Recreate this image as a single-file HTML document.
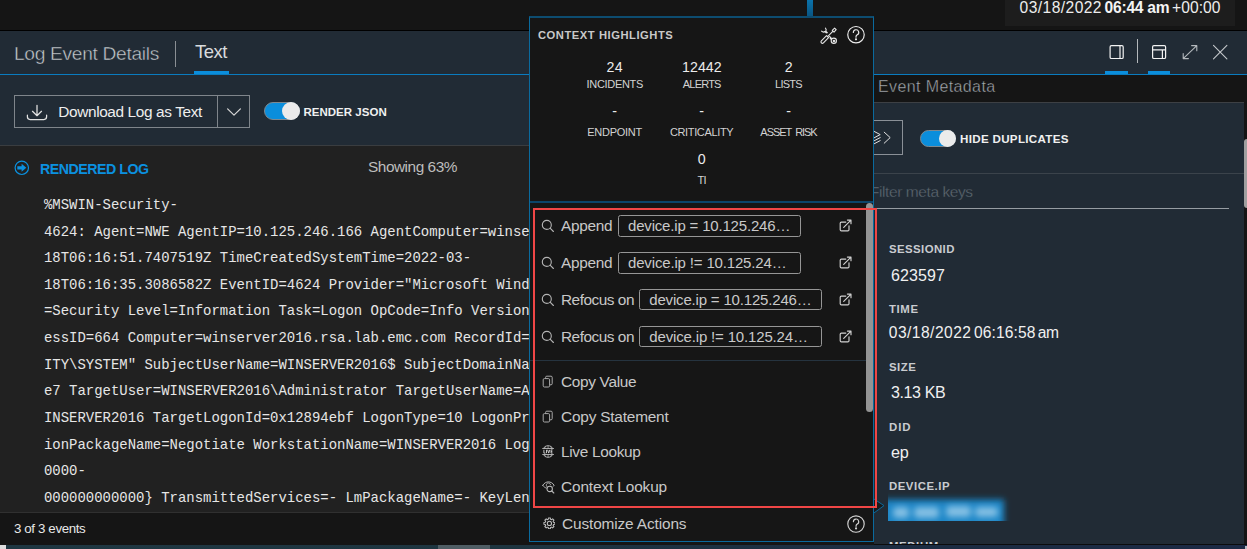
<!DOCTYPE html>
<html>
<head>
<meta charset="utf-8">
<style>
*{box-sizing:border-box;margin:0;padding:0}
html,body{width:1247px;height:549px;overflow:hidden;background:#151515}
body{position:relative;font-family:"Liberation Sans",sans-serif;color:#e4e4e4}
.abs{position:absolute}
.t{position:absolute;white-space:nowrap;line-height:1}
.blue{background:#0b8edc}
#log{position:absolute;left:44px;top:191.9px;font-family:"Liberation Mono",monospace;font-size:13.96px;line-height:26.62px;color:#e6e6e6;white-space:pre}
#pop{position:absolute;left:529px;top:16px;width:345px;height:526.3px;background:#161616;border:1px solid #0a6a9e;border-top:2px solid #0d4c70;border-left-width:1.3px;border-bottom-width:1.3px;border-right-width:1.400px}
.pill{position:absolute;height:21.5px;width:183px;border:1.2px solid #969696;border-radius:2.500px;font-size:15px;color:#c9c9c9;line-height:19px;padding-left:9px;white-space:nowrap;overflow:hidden}
</style>
</head>
<body>
<!-- top bar -->
<div class="abs" style="left:1005px;top:0;width:230px;height:25.600px;background:#1d1d1d"></div>
<div class="abs" style="left:807px;top:0;width:6px;height:17px;background:linear-gradient(#0a72ab,#0a5480)"></div>
<div class="abs" style="left:0;top:30px;width:1247px;height:1px;background:#000"></div>

<!-- main panel header -->
<div class="abs" style="left:0;top:31px;width:1247px;height:43px;background:#212b35"></div>
<div class="abs" style="left:0;top:74px;width:1247px;height:1.400px;background:#0a7cc0"></div>
<div class="abs" style="left:175px;top:41px;width:1px;height:26px;background:#8a8f94"></div>
<div class="abs blue" style="left:194px;top:71px;width:35px;height:3px"></div>
<div class="abs blue" style="left:1105px;top:71px;width:23px;height:3px"></div>
<div class="abs blue" style="left:1148px;top:71px;width:22px;height:3px"></div>
<div class="abs" style="left:1137px;top:39px;width:1px;height:24px;background:#b4b8bc"></div>

<!-- left toolbar -->
<div class="abs" style="left:0;top:75px;width:529px;height:70px;background:#212b35"></div>
<div class="abs" style="left:0;top:145px;width:529px;height:1px;background:#3a3d40"></div>
<div class="abs" style="left:14px;top:95px;width:236px;height:33px;border:1px solid #7f858b"></div>
<div class="abs" style="left:217px;top:95px;width:1px;height:33px;background:#7f858b"></div>
<div class="abs" style="left:264px;top:102.300px;width:35.700px;height:17.600px;border-radius:9px;background:#0b8edc;border:1px solid #7e8990"></div>
<div class="abs" style="left:282.200px;top:102.300px;width:17.600px;height:17.600px;border-radius:9px;background:#ebebeb"></div>

<!-- log area -->
<div class="abs" style="left:0;top:146px;width:529px;height:366px;background:#212121"></div>
<pre id="log">%MSWIN-Security-
4624: Agent=NWE AgentIP=10.125.246.166 AgentComputer=winserver2016
18T06:16:51.7407519Z TimeCreatedSystemTime=2022-03-
18T06:16:35.3086582Z EventID=4624 Provider="Microsoft Windows-Security
=Security Level=Information Task=Logon OpCode=Info Version=2 Keywords
essID=664 Computer=winserver2016.rsa.lab.emc.com RecordId=15360
ITY\SYSTEM" SubjectUserName=WINSERVER2016$ SubjectDomainName=WORK
e7 TargetUser=WINSERVER2016\Administrator TargetUserName=Administrator
INSERVER2016 TargetLogonId=0x12894ebf LogonType=10 LogonProcessName
ionPackageName=Negotiate WorkstationName=WINSERVER2016 LogonGuid={0
0000-
000000000000} TransmittedServices=- LmPackageName=- KeyLength=0</pre>

<!-- footer -->
<div class="abs" style="left:0;top:511.800px;width:529px;height:1.800px;background:#303030"></div>
<div class="abs" style="left:0;top:513px;width:1247px;height:31px;background:#151515"></div>

<!-- right meta panel -->
<div class="abs" style="left:874px;top:75px;width:373px;height:27px;background:#151515"></div>
<div class="abs" style="left:874px;top:102px;width:370px;height:442px;background:#212b35"></div>
<div class="abs" style="left:874px;top:102px;width:370px;height:1px;background:#3d4044"></div>
<div class="abs" style="left:1244px;top:102px;width:3px;height:442px;background:#151515"></div>
<div class="abs" style="left:1244px;top:139px;width:4px;height:69px;border-radius:3px 0 0 3px;background:#a0a0a0"></div>
<div class="abs" style="left:860px;top:120px;width:43px;height:35px;border:1px solid #8a9097"></div>
<div class="abs" style="left:920.300px;top:129.900px;width:35.700px;height:17.600px;border-radius:9px;background:#0b8edc;border:1px solid #7e8990"></div>
<div class="abs" style="left:938.500px;top:129.900px;width:17.600px;height:17.600px;border-radius:9px;background:#ebebeb"></div>
<div class="abs" style="left:874px;top:173px;width:370px;height:1px;background:#3b434b"></div>
<div class="abs" style="left:874px;top:208px;width:355px;height:1px;background:#969ca2"></div>
<svg class="abs" style="left:888px;top:490px;overflow:hidden" width="126" height="30.600" viewBox="0 0 126 30.600"><defs><filter id="bl" x="-20%" y="-50%" width="140%" height="200%"><feGaussianBlur stdDeviation="3"/></filter><filter id="bl2" x="-20%" y="-50%" width="140%" height="200%"><feGaussianBlur stdDeviation="3"/></filter></defs><rect x="-12" y="9.500" width="128" height="44" fill="#1a86c7" filter="url(#bl)"/><g filter="url(#bl2)" fill="#84c0e4"><rect x="5" y="17" width="16" height="11" rx="4"/><rect x="26" y="17" width="25" height="11" rx="4"/><rect x="58" y="16" width="25" height="11" rx="4"/><rect x="87" y="17" width="23" height="10" rx="4"/></g></svg>

<div class="t" style="left:1019.6px;top:-0.21px;font-size:15.6px;color:#ededed;letter-spacing:0.43px;">03/18/2022</div>
<div class="t" style="left:1104.6px;top:-0.21px;font-size:15.6px;color:#f4f4f4;letter-spacing:-0.25px;font-weight:bold;">06:44 am</div>
<div class="t" style="left:1172px;top:-0.21px;font-size:15.6px;color:#ededed;letter-spacing:0.08px;">+00:00</div>
<div class="t" style="left:14px;top:44.05px;font-size:19.2px;color:#c9cdd0;letter-spacing:-0.32px;-webkit-text-stroke:.45px #212b35;">Log Event Details</div>
<div class="t" style="left:195px;top:42.74px;font-size:18.5px;color:#d8dbdd;letter-spacing:-0.48px;">Text</div>
<div class="t" style="left:58.3px;top:104.16px;font-size:15.4px;color:#eeeeee;letter-spacing:-0.38px;">Download Log as Text</div>
<div class="t" style="left:303.4px;top:106.67px;font-size:11.5px;color:#f0f0f0;letter-spacing:0.03px;font-weight:bold;">RENDER JSON</div>
<div class="t" style="left:40px;top:161.78px;font-size:14.2px;color:#0b91e0;letter-spacing:-0.47px;font-weight:bold;">RENDERED LOG</div>
<div class="t" style="left:368px;top:159.36px;font-size:15.4px;color:#bdbdbd;letter-spacing:-0.47px;">Showing 63%</div>
<div class="t" style="left:14px;top:522.24px;font-size:13.3px;color:#e8e8e8;letter-spacing:-0.37px;">3 of 3 events</div>
<div class="t" style="left:878px;top:79.06px;font-size:16px;color:#a9afb4;letter-spacing:0.39px;-webkit-text-stroke:.4px #151515;">Event Metadata</div>
<div class="t" style="left:960px;top:133.48px;font-size:11.6px;color:#f0f0f0;letter-spacing:0.31px;font-weight:bold;">HIDE DUPLICATES</div>
<div class="t" style="left:870px;top:184.38px;font-size:15.5px;color:#626d76;letter-spacing:-0.42px;-webkit-text-stroke:.35px #212b35;">Filter meta keys</div>
<div class="t" style="left:889px;top:244.35px;font-size:11.4px;color:#c9ccd0;letter-spacing:0.42px;font-weight:bold;">SESSIONID</div>
<div class="t" style="left:891px;top:267.76px;font-size:16px;color:#f0f0f0;letter-spacing:0.10px;">623597</div>
<div class="t" style="left:889px;top:304.35px;font-size:11.4px;color:#c9ccd0;letter-spacing:0.60px;font-weight:bold;">TIME</div>
<div class="t" style="left:888.8px;top:325.39px;font-size:15.6px;color:#f0f0f0;letter-spacing:0.46px;">03/18/2022</div>
<div class="t" style="left:974px;top:325.39px;font-size:15.6px;color:#f0f0f0;letter-spacing:0.09px;">06:16:58</div>
<div class="t" style="left:1037.8px;top:325.39px;font-size:15.6px;color:#f0f0f0;letter-spacing:-0.54px;">am</div>
<div class="t" style="left:889px;top:361.75px;font-size:11.4px;color:#c9ccd0;letter-spacing:0.49px;font-weight:bold;">SIZE</div>
<div class="t" style="left:891px;top:385.06px;font-size:16px;color:#f0f0f0;letter-spacing:-0.38px;">3.13 KB</div>
<div class="t" style="left:889px;top:421.65px;font-size:11.4px;color:#c9ccd0;letter-spacing:0.92px;font-weight:bold;">DID</div>
<div class="t" style="left:891px;top:443.69px;font-size:16.2px;color:#f0f0f0;letter-spacing:-0.21px;">ep</div>
<div class="t" style="left:889px;top:481.15px;font-size:11.4px;color:#c9ccd0;letter-spacing:0.52px;font-weight:bold;">DEVICE.IP</div>
<div class="t" style="left:889px;top:541.35px;font-size:11.4px;color:#c9ccd0;letter-spacing:0.60px;font-weight:bold;">MEDIUM</div>
<!-- popup -->
<div id="pop"></div>
<div class="abs" style="left:530px;top:201.300px;width:343px;height:1.600px;background:#0b456a"></div>
<div class="abs" style="left:530px;top:360px;width:336px;height:1px;background:#25333f"></div>
<div class="pill" style="left:618px;top:215px;letter-spacing:-0.18px">device.ip = 10.125.246…</div>
<div class="pill" style="left:618px;top:252px;letter-spacing:-0.16px">device.ip != 10.125.24…</div>
<div class="pill" style="left:639.3px;top:288.8px;letter-spacing:-0.18px">device.ip = 10.125.246…</div>
<div class="pill" style="left:639.3px;top:325.8px;letter-spacing:-0.16px">device.ip != 10.125.24…</div>
<!-- popup scrollbar -->
<div class="abs" style="left:866px;top:203px;width:7px;height:209px;border-radius:3.5px;background:#949494"></div>
<!-- red annotation -->
<svg class="abs" style="left:868px;top:494px" width="20" height="24" viewBox="0 0 20 24"><path d="M5.500 4.700L16 11.600 5.500 19.300z" fill="#191919" stroke="#0a6a9e" stroke-width="1"/></svg>
<div class="abs" style="left:532.5px;top:208px;width:344.700px;height:300px;border:2px solid #f04646"></div>
<div class="t" style="left:538px;top:30.12px;font-size:11.2px;color:#c9c9c9;letter-spacing:0.54px;font-weight:bold;">CONTEXT HIGHLIGHTS</div>
<div class="t" style="left:614.7px;top:60.38px;font-size:14.2px;color:#ececec;letter-spacing:0.36px;transform:translateX(-50%);">24</div>
<div class="t" style="left:614.8px;top:78.99px;font-size:11px;color:#d2d2d2;letter-spacing:-0.30px;transform:translateX(-50%);">INCIDENTS</div>
<div class="t" style="left:701.9px;top:60.38px;font-size:14.2px;color:#ececec;letter-spacing:0.03px;transform:translateX(-50%);">12442</div>
<div class="t" style="left:701.7px;top:78.99px;font-size:11px;color:#d2d2d2;letter-spacing:-0.80px;transform:translateX(-50%);">ALERTS</div>
<div class="t" style="left:788.8px;top:60.38px;font-size:14.2px;color:#ececec;transform:translateX(-50%);">2</div>
<div class="t" style="left:788.4px;top:78.99px;font-size:11px;color:#d2d2d2;letter-spacing:-0.80px;transform:translateX(-50%);">LISTS</div>
<div class="t" style="left:614.7px;top:103.58px;font-size:14.2px;color:#ececec;transform:translateX(-50%);">-</div>
<div class="t" style="left:614.6px;top:126.99px;font-size:11px;color:#d2d2d2;letter-spacing:-0.26px;transform:translateX(-50%);">ENDPOINT</div>
<div class="t" style="left:701.6px;top:103.58px;font-size:14.2px;color:#ececec;transform:translateX(-50%);">-</div>
<div class="t" style="left:701.6px;top:126.99px;font-size:11px;color:#d2d2d2;letter-spacing:-0.36px;transform:translateX(-50%);">CRITICALITY</div>
<div class="t" style="left:788.5px;top:103.58px;font-size:14.2px;color:#ececec;transform:translateX(-50%);">-</div>
<div class="t" style="left:788.5px;top:126.99px;font-size:11px;color:#d2d2d2;letter-spacing:-1.05px;transform:translateX(-50%);word-spacing:2.2px;">ASSET RISK</div>
<div class="t" style="left:701.6px;top:152.28px;font-size:14.2px;color:#ececec;transform:translateX(-50%);">0</div>
<div class="t" style="left:701.6px;top:174.99px;font-size:11px;color:#d2d2d2;letter-spacing:-0.69px;transform:translateX(-50%);">TI</div>
<div class="t" style="left:561px;top:218.16px;font-size:15.4px;color:#c8c8c8;letter-spacing:-0.28px;">Append</div>
<div class="t" style="left:561px;top:255.16px;font-size:15.4px;color:#c8c8c8;letter-spacing:-0.28px;">Append</div>
<div class="t" style="left:561px;top:291.96px;font-size:15.4px;color:#c8c8c8;letter-spacing:-0.49px;">Refocus on</div>
<div class="t" style="left:561px;top:328.96px;font-size:15.4px;color:#c8c8c8;letter-spacing:-0.49px;">Refocus on</div>
<div class="t" style="left:561px;top:373.76px;font-size:15.4px;color:#c8c8c8;letter-spacing:-0.32px;">Copy Value</div>
<div class="t" style="left:561px;top:409.36px;font-size:15.4px;color:#c8c8c8;letter-spacing:-0.20px;">Copy Statement</div>
<div class="t" style="left:561px;top:444.36px;font-size:15.4px;color:#c8c8c8;letter-spacing:-0.31px;">Live Lookup</div>
<div class="t" style="left:561px;top:479.36px;font-size:15.4px;color:#c8c8c8;letter-spacing:-0.13px;">Context Lookup</div>
<div class="t" style="left:562px;top:515.56px;font-size:15.4px;color:#c8c8c8;letter-spacing:-0.13px;">Customize Actions</div>
<!-- icons -->
<svg class="abs" style="left:25px;top:103px" width="24" height="19" viewBox="0 0 24 19" fill="none" stroke="#e2e2e2" stroke-width="1.25" stroke-linecap="round" stroke-linejoin="round"><path d="M12 2.3V12.6M7.500 8.300l4.500 4.400 4.500-4.400M2.4 12.2v1.6a2.7 2.7 0 0 0 2.7 2.7h13.8a2.7 2.7 0 0 0 2.7-2.7v-1.6"/></svg>
<svg class="abs" style="left:226px;top:107px" width="16" height="10" viewBox="0 0 16 10" fill="none" stroke="#d8d8d8" stroke-width="1.2" stroke-linecap="round" stroke-linejoin="round"><path d="M1.6 1.8L8 8.2l6.4-6.4"/></svg>
<svg class="abs" style="left:14px;top:160px" width="16" height="16" viewBox="0 0 16 16"><circle cx="7.800" cy="7.800" r="6.700" fill="none" stroke="#0b91e0" stroke-width="1.200"/><path d="M3.300 6.200h4.300V3.800l4.700 4-4.700 4V9.400H3.300z" fill="#0b91e0"/></svg>
<!-- header right icons -->
<svg class="abs" style="left:1108px;top:44px" width="17" height="17" viewBox="0 0 17 17" fill="none" stroke="#f2f2f2" stroke-width="1.2"><rect x="2.100" y="1.700" width="13.100" height="12.800" rx="1.300"/><path d="M12 1.700v12.800"/></svg>
<svg class="abs" style="left:1151px;top:44px" width="17" height="17" viewBox="0 0 17 17" fill="none" stroke="#f2f2f2" stroke-width="1.2"><rect x="1.600" y="1.700" width="13" height="12.800" rx="1.300"/><path d="M1.600 5.800h13M11.400 5.800v8.700"/></svg>
<svg class="abs" style="left:1181px;top:44px" width="18" height="17" viewBox="0 0 18 17" fill="none" stroke="#b3b8bc" stroke-width="1.1" stroke-linecap="round" stroke-linejoin="round"><path d="M2.2 14.6L15.8 1.6M10.6 1.6h5.2v5.2M2.2 9.6v5h5.2"/></svg>
<svg class="abs" style="left:1212px;top:44px" width="17" height="17" viewBox="0 0 17 17" fill="none" stroke="#c4c8cb" stroke-width="1.1" stroke-linecap="round"><path d="M1.500 1.400l13.400 13.400M14.900 1.400L1.500 14.800"/></svg>
<!-- expand button icon in meta panel -->
<svg class="abs" style="left:874px;top:128px" width="20" height="20" viewBox="0 0 20 20" fill="none" stroke="#e2e2e2" stroke-width="1" stroke-linecap="round" stroke-linejoin="round"><path d="M-1 2.800L6.200 6.600-1 10.400M6.200 9.600L-1 13.400M6.200 12.600L-1 16.400M10.200 4.200l6 5.400-6 5.600"/></svg>
<!-- popup header icons -->
<svg class="abs" style="left:820px;top:26.800px" width="18.500" height="17.500" viewBox="0 0 19 18" fill="none" stroke="#e6e6e6" stroke-width="1.15" stroke-linecap="round" stroke-linejoin="round"><path d="M1.4 14.2l5.3-5.3 2.1 2.1-5.3 5.3a1.48 1.48 0 0 1-2.1-2.1zM7.8 9.9l5.6-5.6M12.6 3.4l2.4-2.2 1.6 1.6-2.2 2.4z"/><path d="M5.6 1.2c.9 1 1 2.200.3 3.100l1.600 1.600M1.600 4.300c1 .9 2.400 1.100 3.400.4l1.400 1.400M9.800 9.700l2 2M10.400 11.500l1.100 1.100"/><circle cx="14.2" cy="14.200" r="2.700"/><circle cx="14.400" cy="14.400" r=".8"/></svg>
<svg class="abs" style="left:846.200px;top:25.400px" width="19.600" height="19.600" viewBox="0 0 20 20" fill="none" stroke="#ececec" stroke-width="1.2" stroke-linecap="round" stroke-linejoin="round"><circle cx="10.200" cy="9.900" r="8.400"/><path d="M7.500 7.600a2.750 2.750 0 1 1 4 2.450c-.85.500-1.300 1-1.300 1.900v.500"/><circle cx="10.200" cy="14.600" r=".500" fill="#ececec"/></svg>
<svg class="abs" style="left:845.500px;top:513.500px" width="20" height="20" viewBox="0 0 20 20" fill="none" stroke="#d4d4d4" stroke-width="1.150" stroke-linecap="round" stroke-linejoin="round"><circle cx="10" cy="10" r="8.200"/><path d="M7.400 7.700a2.650 2.650 0 1 1 3.900 2.350c-.8.500-1.250 1-1.250 1.850v.400"/><circle cx="10.050" cy="14.400" r=".500" fill="#d4d4d4"/></svg>
<svg class="abs" style="left:541px;top:219px" width="14" height="14" viewBox="0 0 14 14" fill="none" stroke="#b4b4b4" stroke-width="1.1" stroke-linecap="round"><circle cx="5.800" cy="5.900" r="4.500"/><path d="M9.100 9.200l3.300 3.300"/></svg>
<svg class="abs" style="left:838px;top:219px" width="15" height="14" viewBox="0 0 15 14" fill="none" stroke="#d2d2d2" stroke-width="1.150" stroke-linecap="round" stroke-linejoin="round"><path d="M7.800 3.100H3.400a1.200 1.200 0 0 0-1.200 1.200v6.400a1.200 1.200 0 0 0 1.200 1.200h6.400a1.200 1.200 0 0 0 1.200-1.200V6.800M5.700 8.400l7.300-7.300M9.400 1.100h3.600v3.600"/></svg>
<svg class="abs" style="left:541px;top:256px" width="14" height="14" viewBox="0 0 14 14" fill="none" stroke="#b4b4b4" stroke-width="1.1" stroke-linecap="round"><circle cx="5.800" cy="5.900" r="4.500"/><path d="M9.100 9.200l3.300 3.300"/></svg>
<svg class="abs" style="left:838px;top:256px" width="15" height="14" viewBox="0 0 15 14" fill="none" stroke="#d2d2d2" stroke-width="1.150" stroke-linecap="round" stroke-linejoin="round"><path d="M7.800 3.100H3.400a1.200 1.200 0 0 0-1.200 1.200v6.400a1.200 1.200 0 0 0 1.200 1.200h6.400a1.200 1.200 0 0 0 1.200-1.200V6.800M5.700 8.400l7.300-7.300M9.400 1.100h3.600v3.600"/></svg>
<svg class="abs" style="left:541px;top:293px" width="14" height="14" viewBox="0 0 14 14" fill="none" stroke="#b4b4b4" stroke-width="1.1" stroke-linecap="round"><circle cx="5.800" cy="5.900" r="4.500"/><path d="M9.100 9.200l3.300 3.300"/></svg>
<svg class="abs" style="left:838px;top:293px" width="15" height="14" viewBox="0 0 15 14" fill="none" stroke="#d2d2d2" stroke-width="1.150" stroke-linecap="round" stroke-linejoin="round"><path d="M7.800 3.100H3.400a1.200 1.200 0 0 0-1.200 1.200v6.400a1.200 1.200 0 0 0 1.200 1.200h6.400a1.200 1.200 0 0 0 1.200-1.200V6.800M5.700 8.400l7.300-7.300M9.400 1.100h3.600v3.600"/></svg>
<svg class="abs" style="left:541px;top:330px" width="14" height="14" viewBox="0 0 14 14" fill="none" stroke="#b4b4b4" stroke-width="1.1" stroke-linecap="round"><circle cx="5.800" cy="5.900" r="4.500"/><path d="M9.100 9.200l3.300 3.300"/></svg>
<svg class="abs" style="left:838px;top:330px" width="15" height="14" viewBox="0 0 15 14" fill="none" stroke="#d2d2d2" stroke-width="1.150" stroke-linecap="round" stroke-linejoin="round"><path d="M7.800 3.100H3.400a1.200 1.200 0 0 0-1.200 1.200v6.400a1.200 1.200 0 0 0 1.200 1.200h6.400a1.200 1.200 0 0 0 1.200-1.200V6.800M5.700 8.400l7.300-7.300M9.400 1.100h3.600v3.600"/></svg>
<svg class="abs" style="left:542px;top:375px" width="12" height="13" viewBox="0 0 12 13" fill="none" stroke="#a9a9a9" stroke-width="1" stroke-linejoin="round"><rect x="1.200" y="3.600" width="6.400" height="8.400" rx="1.200"/><path d="M3.600 3.400V2.400a1.200 1.200 0 0 1 1.200-1.200h4.200a1.200 1.200 0 0 1 1.200 1.200v6.200a1.200 1.200 0 0 1-1.200 1.200H7.800"/></svg>
<svg class="abs" style="left:542px;top:410px" width="12" height="13" viewBox="0 0 12 13" fill="none" stroke="#a9a9a9" stroke-width="1" stroke-linejoin="round"><rect x="1.200" y="3.600" width="6.400" height="8.400" rx="1.200"/><path d="M3.600 3.400V2.400a1.200 1.200 0 0 1 1.200-1.200h4.200a1.200 1.200 0 0 1 1.200 1.200v6.200a1.200 1.200 0 0 1-1.200 1.200H7.800"/></svg>
<svg class="abs" style="left:541.600px;top:445.400px" width="12.200" height="13" viewBox="0 0 12.200 13" fill="none" stroke="#c2c2c2" stroke-width="1" stroke-linecap="butt"><path d="M1.300 3.600C2.400 1.700 4.100.700 6.100.700s3.700 1 4.800 2.900M1.300 9.400c1.100 1.900 2.800 2.900 4.800 2.900s3.700-1 4.800-2.900" stroke-width=".900"/><path d="M.300 3.500h11.600M.300 9.500h11.600" stroke-width="1.100" stroke="#adadad"/><path d="M6.100.700v2.800M6.100 9.500v2.800M3.700 1.300c-.5.600-.8 1.400-1 2.200M8.500 1.300c.5.600.8 1.400 1 2.200M3.700 11.700c-.5-.6-.8-1.400-1-2.200M8.500 11.700c.5-.6.8-1.400 1-2.200" stroke-width=".700"/><path d="M1.900 4.800v3.300h1.500M4.500 4.800v3.400M5.600 4.800l1.100 3.300 1.100-3.300M10.600 4.900H9.100v3.200h1.500M9.100 6.500h1.200" stroke-width=".950" stroke="#cfcfcf"/></svg>
<svg class="abs" style="left:542px;top:481px" width="13" height="13" viewBox="0 0 13 13" fill="none" stroke="#b9b9b9" stroke-width="1" stroke-linecap="round" stroke-linejoin="round"><path d="M.700 4.300C2.300 1.900 4.300.900 6.400.900s4.200 1 5.700 3.400c-.3.500-.7 1-1.100 1.300M.700 4.300C1.700 5.700 2.900 6.600 4.300 7.100"/><path d="M4.600 5.400a2.200 2.200 0 1 1 4-1.600" stroke-width=".900"/><circle cx="7.700" cy="7.900" r="2.700" stroke-width="1.050"/><path d="M9.700 9.900l2.100 2.100" stroke-width="1.150"/></svg>
<svg class="abs" style="left:542.500px;top:516.600px" width="12.800" height="12.800" viewBox="0 0 14 14" fill="none" stroke="#bdbdbd" stroke-width="1.150" stroke-linejoin="round"><path d="M5.79 2.46 L5.97 0.99 L8.03 0.99 L8.21 2.46 L9.36 2.93 L10.52 2.02 L11.98 3.48 L11.07 4.64 L11.54 5.79 L13.01 5.97 L13.01 8.03 L11.54 8.21 L11.07 9.36 L11.98 10.52 L10.52 11.98 L9.36 11.07 L8.21 11.54 L8.03 13.01 L5.97 13.01 L5.79 11.54 L4.64 11.07 L3.48 11.98 L2.02 10.52 L2.93 9.36 L2.46 8.21 L0.99 8.03 L0.99 5.97 L2.46 5.79 L2.93 4.64 L2.02 3.48 L3.48 2.02 L4.64 2.93Z"/><circle cx="7" cy="7" r="2.300"/></svg>

<!-- bottom strip -->
<div class="abs" style="left:874px;top:543.700px;width:373px;height:1.500px;background:#0c0c0c"></div>
<div class="abs" style="left:0;top:545px;width:1247px;height:4px;background:linear-gradient(90deg,#1f3742 0,#1e3540 40%,#1c2c42 75%,#1c2a45 100%)"></div>
<div class="abs" style="left:0;top:545px;width:6px;height:4px;background:#dedede"></div>
<div class="abs" style="left:438px;top:545px;width:52px;height:4px;background:#4f5d64"></div>
<div class="abs" style="left:1245px;top:546px;width:2px;height:3px;background:#b8bcc4"></div>
</body>
</html>
